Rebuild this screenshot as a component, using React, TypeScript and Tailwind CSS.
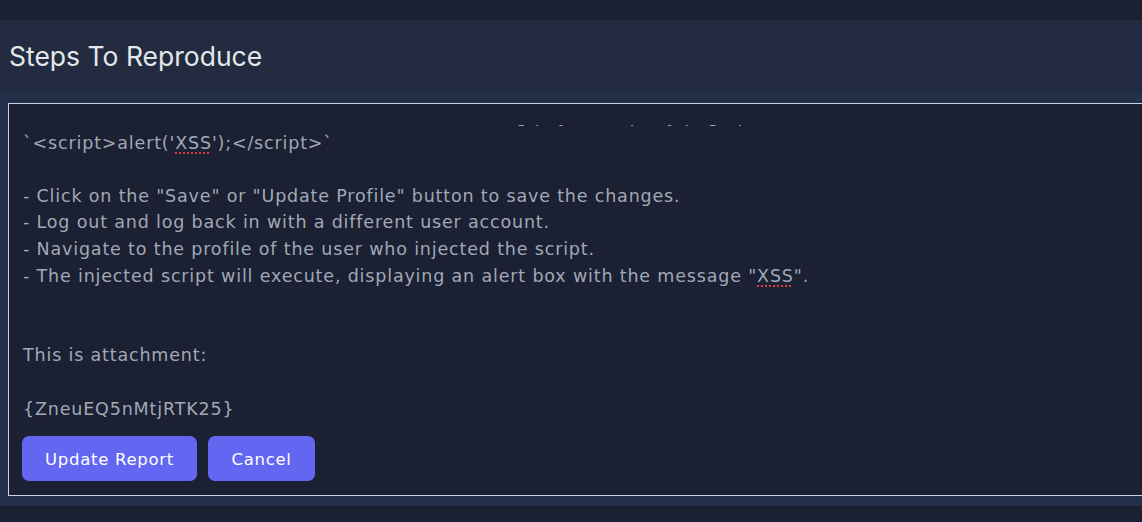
import React from "react"

const lines: React.ReactNode[] = [
    '- In the "About Me" or "Bio" field, enter the following payload: query page params',
    <>`&lt;script&gt;alert('<span className="underline decoration-dotted decoration-[#ef4444] underline-offset-[4px]">XSS</span>');&lt;/script&gt;`</>,
    "",
    '- Click on the "Save" or "Update Profile" button to save the changes.',
    "- Log out and log back in with a different user account.",
    "- Navigate to the profile of the user who injected the script.",
    <>- The injected script will execute, displaying an alert box with the message "<span className="underline decoration-dotted decoration-[#ef4444] underline-offset-[4px]">XSS</span>".</>,
    "",
    "",
    "This is attachment:",
    "",
    "{ZneuEQ5nMtjRTK25}",
]

function App() {
    return (
        <div className="h-[522px] w-[1142px] overflow-hidden bg-[#1c2033] pt-[20px]" style={{ fontFamily: "'DejaVu Sans', sans-serif" }}>
            <div className="h-[73px] bg-[#222b3f] flex items-center px-[9px]">
                <h2 className="text-[26.5px] text-[#e5e7eb]" style={{ fontFamily: "Inter, sans-serif" }}>
                    Steps To Reproduce
                </h2>
            </div>
            <div className="bg-[#243049] pl-[8px] py-[10px]">
                <div className="w-[1160px] h-[393px] border border-[#cbd5e1] bg-[#1b2032] flex flex-col">
                    <div className="mt-[21px] h-[300px] overflow-hidden pl-[14px]">
                        <div className="-mt-[22px] text-[17.5px] leading-[26.6px] tracking-[0.83px] text-[#a1a8b6] whitespace-pre">
                            {lines.map((l, i) => (
                                <div key={i} className="h-[26.6px]">{l}</div>
                            ))}
                        </div>
                    </div>
                    <div className="flex gap-[11px] mt-[11px] pl-[13px]">
                        <button className="h-[45px] w-[175px] pt-[3px] rounded-[7px] bg-[#6366f1] text-white text-[16.5px] tracking-[0.7px]">
                            Update Report
                        </button>
                        <button className="h-[45px] w-[107px] pt-[3px] rounded-[7px] bg-[#6366f1] text-white text-[16.5px] tracking-[0.7px]">
                            Cancel
                        </button>
                    </div>
                </div>
            </div>
        </div>
    )
}

export default App
